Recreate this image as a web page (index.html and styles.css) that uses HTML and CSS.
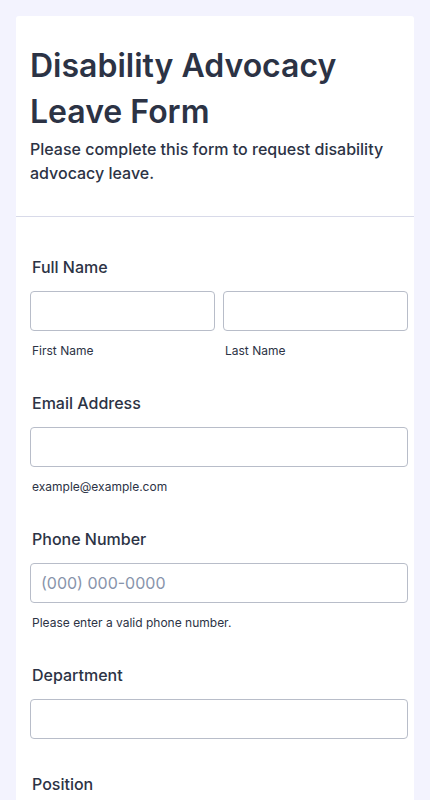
FILE: index.html
```html
<!DOCTYPE html>
<html lang="en">
<head>
<meta charset="utf-8">
<title>Disability Advocacy Leave Form</title>
<link rel="stylesheet" href="styles.css">
</head>
<body>
<main class="card">
  <header class="form-header">
    <h1 class="title">Disability Advocacy Leave Form</h1>
    <p class="subtitle">Please complete this form to request disability advocacy leave.</p>
  </header>
  <form class="fields">
    <div class="field">
      <label class="label">Full Name</label>
      <div class="name-row">
        <div class="name-col">
          <input class="input" type="text">
          <span class="sublabel">First Name</span>
        </div>
        <div class="name-col">
          <input class="input" type="text">
          <span class="sublabel">Last Name</span>
        </div>
      </div>
    </div>
    <div class="field">
      <label class="label">Email Address</label>
      <input class="input" type="email">
      <span class="sublabel">example@example.com</span>
    </div>
    <div class="field">
      <label class="label">Phone Number</label>
      <input class="input" type="tel" placeholder="(000) 000-0000">
      <span class="sublabel">Please enter a valid phone number.</span>
    </div>
    <div class="field">
      <label class="label">Department</label>
      <input class="input" type="text">
    </div>
    <div class="field">
      <label class="label">Position</label>
      <input class="input" type="text">
    </div>
  </form>
</main>
</body>
</html>
```
FILE: styles.css
```css
html, body {
  margin: 0;
  padding: 0;
}
body {
  background: #f3f3fe;
  font-family: Inter, "Noto Sans", sans-serif;
  color: #2c3345;
  padding: 16px 16px 0 16px;
}
.card {
  background: #ffffff;
  border-radius: 3px 3px 0 0;
  min-height: 900px;
}
.form-header {
  padding: 27px 20px 31px 14px;
  border-bottom: 1px solid #d8dae9;
}
.title {
  margin: 0;
  font-size: 32px;
  line-height: 46px;
  font-weight: 600;
  color: #2c3345;
}
.subtitle {
  margin: 2px 0 0 0;
  font-size: 16px;
  line-height: 24px;
  font-weight: 500;
  color: #2c3345;
}
.fields {
  display: flex;
  flex-direction: column;
  gap: 35px;
  padding: 40px 6px 0 14px;
}
.field {
  display: flex;
  flex-direction: column;
}
.label {
  font-size: 16px;
  line-height: 20px;
  font-weight: 500;
  padding-left: 2px;
  margin-bottom: 14px;
}
.name-row {
  display: flex;
  gap: 8px;
}
.name-col {
  flex: 1;
  display: flex;
  flex-direction: column;
  min-width: 0;
}
.input {
  box-sizing: border-box;
  width: 100%;
  height: 40px;
  border: 1px solid #b8bdc9;
  border-radius: 4px;
  background: #fff;
  padding: 0 10px;
  font-family: Inter, "Noto Sans", sans-serif;
  font-size: 16px;
  color: #2c3345;
  margin: 0;
}
.input::placeholder {
  color: #8894ab;
}
.sublabel {
  font-size: 12px;
  line-height: 15px;
  margin-top: 12px;
  padding-left: 2px;
  color: #2c3345;
}
```
